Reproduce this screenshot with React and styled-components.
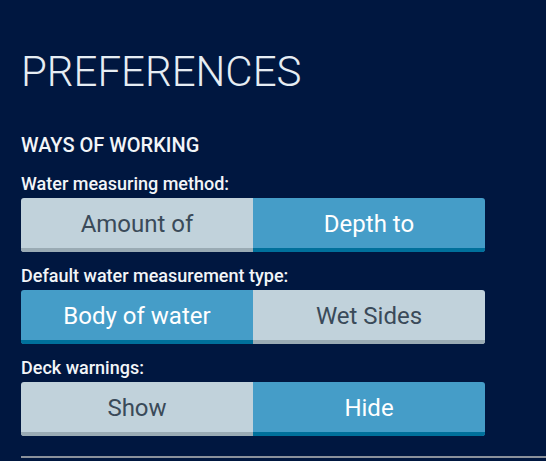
import React, { useState } from "react";
import styled, { createGlobalStyle } from "styled-components";

const Global = createGlobalStyle`
  html, body { margin: 0; padding: 0; background: #001740; }
  body { font-family: Roboto, "Noto Sans", sans-serif; -webkit-font-smoothing: antialiased; }
`;

const Page = styled.div`
  min-height: 461px;
  box-sizing: border-box;
  padding: 47px 0 0 21px;
  background: #001740;
  color: #eef3f7;
`;

const Title = styled.h1`
  margin: 0;
  font-size: 42px;
  line-height: 50px;
  font-weight: 300;
  color: #e6edf3;
`;

const SectionHeading = styled.h2`
  margin: 36px 0 0;
  font-size: 20px;
  line-height: 24px;
  font-weight: 500;
  color: #f2f5f8;
`;

const Group = styled.div`
  display: flex;
  flex-direction: column;
  margin-top: ${(p) => (p.$first ? "16px" : "13px")};
`;

const Label = styled.div`
  font-size: 18px;
  line-height: 22px;
  font-weight: 500;
  color: #f2f5f8;
  margin-bottom: 3px;
`;

const Toggle = styled.div`
  display: flex;
  width: 464px;
  height: 54px;
  border-radius: 3px;
  overflow: hidden;
`;

const Option = styled.button`
  flex: 1 1 0;
  border: none;
  margin: 0;
  padding: 2px 0 0;
  box-sizing: border-box;
  height: 54px;
  font-family: inherit;
  font-size: 24px;
  font-weight: 400;
  cursor: pointer;
  background: ${(p) => (p.$active ? "#459dc8" : "#c1d2db")};
  color: ${(p) => (p.$active ? "#ffffff" : "#3a4a59")};
  border-bottom: 4px solid ${(p) => (p.$active ? "#00709b" : "#9aabb4")};
`;

const Divider = styled.hr`
  margin: 20px 0 0;
  border: none;
  height: 2px;
  background: #8a919b;
`;

function ToggleGroup({ label, options, initial, first }) {
  const [value, setValue] = useState(initial);
  return (
    <Group $first={first}>
      <Label>{label}</Label>
      <Toggle>
        {options.map((o, i) => (
          <Option key={o} $active={value === i} onClick={() => setValue(i)}>
            {o}
          </Option>
        ))}
      </Toggle>
    </Group>
  );
}

export default function App() {
  return (
    <>
      <Global />
      <Page>
        <Title>PREFERENCES</Title>
        <SectionHeading>WAYS OF WORKING</SectionHeading>
        <ToggleGroup
          first
          label="Water measuring method:"
          options={["Amount of", "Depth to"]}
          initial={1}
        />
        <ToggleGroup
          label="Default water measurement type:"
          options={["Body of water", "Wet Sides"]}
          initial={0}
        />
        <ToggleGroup label="Deck warnings:" options={["Show", "Hide"]} initial={1} />
        <Divider />
      </Page>
    </>
  );
}
